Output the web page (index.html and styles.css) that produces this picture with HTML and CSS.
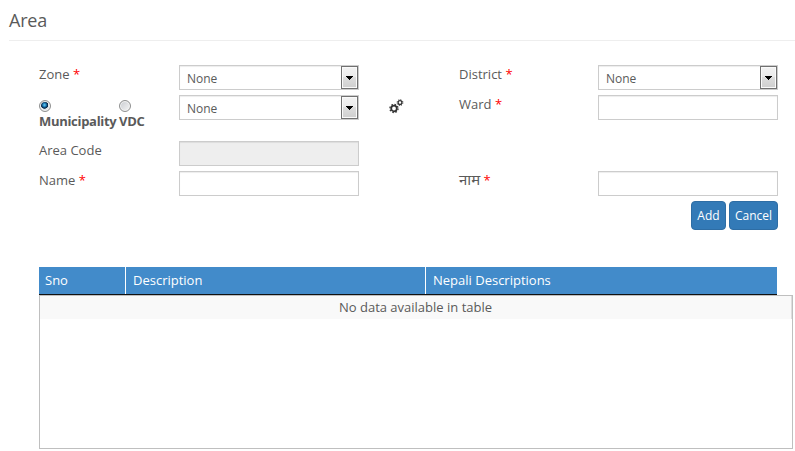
FILE: index.html
```html
<!DOCTYPE html>
<html lang="en">
<head>
<meta charset="utf-8">
<title>Area</title>
<link rel="stylesheet" href="styles.css">
</head>
<body>
<h1 class="title">Area</h1>
<form class="form">
  <label class="label">Zone <span class="req">*</span></label>
  <div class="select"><span class="value">None</span><span class="arrow"><svg width="7" height="4" viewBox="0 0 7 4"><path d="M0 0h7v1H6v1H5v1H4v1H3V3H2V2H1V1H0z"/></svg></span></div>
  <span></span>
  <label class="label">District <span class="req">*</span></label>
  <div class="select"><span class="value">None</span><span class="arrow"><svg width="7" height="4" viewBox="0 0 7 4"><path d="M0 0h7v1H6v1H5v1H4v1H3V3H2V2H1V1H0z"/></svg></span></div>

  <div class="radios">
    <label class="option municipality"><span class="radio checked"></span><span>Municipality</span></label>
    <label class="option"><span class="radio"></span><span>VDC</span></label>
  </div>
  <div class="select"><span class="value">None</span><span class="arrow"><svg width="7" height="4" viewBox="0 0 7 4"><path d="M0 0h7v1H6v1H5v1H4v1H3V3H2V2H1V1H0z"/></svg></span></div>
  <div class="gears">
    <svg width="15" height="15" viewBox="0 0 15 15" fill="none" stroke="#333">
      <circle cx="5" cy="9.5" r="2.8" stroke-width="1.8"/>
      <circle cx="5" cy="9.5" r="4.1" stroke-width="1.2" stroke-dasharray="1.61 1.61"/>
      <circle cx="11" cy="3.6" r="1.9" stroke-width="1.3"/>
      <circle cx="11" cy="3.6" r="2.9" stroke-width="1" stroke-dasharray="1.14 1.14"/>
    </svg>
  </div>
  <label class="label">Ward <span class="req">*</span></label>
  <input class="input" type="text">

  <label class="label">Area Code</label>
  <input class="input" type="text" disabled>
  <span></span><span></span><span></span>

  <label class="label">Name <span class="req">*</span></label>
  <input class="input" type="text">
  <span></span>
  <label class="label"><span class="nepali" lang="ne">नाम</span> <span class="req">*</span></label>
  <input class="input" type="text">

  <div class="actions">
    <button class="btn add" type="button">Add</button>
    <button class="btn cancel" type="button">Cancel</button>
  </div>
</form>
<div class="table">
  <div class="thead">
    <div class="th">Sno</div>
    <div class="th">Description</div>
    <div class="th">Nepali Descriptions</div>
  </div>
  <div class="tbody">
    <div class="empty">No data available in table</div>
  </div>
</div>
</body>
</html>
```
FILE: styles.css
```css
* { box-sizing: border-box; }
body {
  margin: 0;
  height: 451px;
  overflow: hidden;
  background: #fff;
  color: #5a5a5a;
  font: 13px/18px "Open Sans", "Noto Sans", sans-serif;
}
.title {
  margin: 0 0 24px 9px;
  height: 41px;
  padding-top: 8px;
  border-bottom: 1px solid #eee;
  font-size: 18px;
  line-height: 25px;
  font-weight: 400;
  letter-spacing: -.2px;
}
.form {
  display: grid;
  grid-template-columns: 140px 180px 100px 139px 180px;
  grid-template-rows: 30px 46px 30px 30px 30px;
  align-items: start;
  margin-left: 39px;
  width: 739px;
}
.label { white-space: nowrap; }
.nepali { font-size: 15px; line-height: 1; }
.req { color: #f00; }
.input, .select {
  width: 180px;
  height: 25px;
  border: 1px solid #ccc;
  border-radius: 0;
  background: #fff;
  box-shadow: inset 0 1px 1px rgba(0, 0, 0, .075);
}
.input { display: block; padding: 0 7px; font: inherit; color: inherit; }
.input:disabled { background: #eee; }
.select { display: flex; justify-content: space-between; font-size: 12px; }
.value { padding: 4px 0 0 7px; }
.arrow {
  display: flex;
  align-items: center;
  justify-content: center;
  width: 17px;
  height: 23px;
  border: 1px solid #707070;
  box-shadow: inset 0 0 0 1px #fafafa;
  background: linear-gradient(#f2f2f2 0, #ebebeb 48%, #ddd 50%, #cfcfcf 100%);
}
.radios { display: flex; padding-top: 5px; font-weight: 700; line-height: 15px; letter-spacing: -.3px; }
.option { display: flex; flex-direction: column; gap: 2px; }
.municipality { width: 80px; }
.radio {
  width: 12px;
  height: 12px;
  border: 1px solid #8e8f8f;
  border-radius: 50%;
  box-shadow: inset 0 0 0 1px #f4f4f4;
  background: linear-gradient(135deg, #c8cbd0, #f6f6f6);
}
.checked { background: radial-gradient(circle at 45% 40%, #6cd0f5 0, #1979b5 1.8px, #0b2d4d 3px, #0b2d4d 3.4px, #dfe3e6 4px); }
.gears { padding: 4px 0 0 30px; line-height: 0; }
.actions { grid-column: 1 / -1; display: flex; justify-content: flex-end; gap: 3px; }
.btn {
  height: 29px;
  padding: 0;
  border: 1px solid #2e6da4;
  border-radius: 4px;
  background: #337ab7;
  color: #fff;
  font: 12px/18px "Open Sans", sans-serif;
}
.add { width: 35px; }
.cancel { width: 49px; }
.table { margin: 36px 0 0 39px; width: 754px; }
.thead {
  display: grid;
  grid-template-columns: 87px 300px 351px;
  width: 738px;
  height: 28px;
  border-bottom: 1px solid #111;
  background: #428bca;
  color: #fff;
}
.th { padding: 4px 0 0 7px; border-right: 1px solid #fff; }
.th:first-child { padding-left: 6px; }
.th:last-child { border-right: 0; }
.tbody { height: 154px; border: 1px solid #bfbfbf; }
.empty { height: 23px; padding-top: 2px; border-right: 1px solid #ddd; background: #f9f9f9; text-align: center; }
```
